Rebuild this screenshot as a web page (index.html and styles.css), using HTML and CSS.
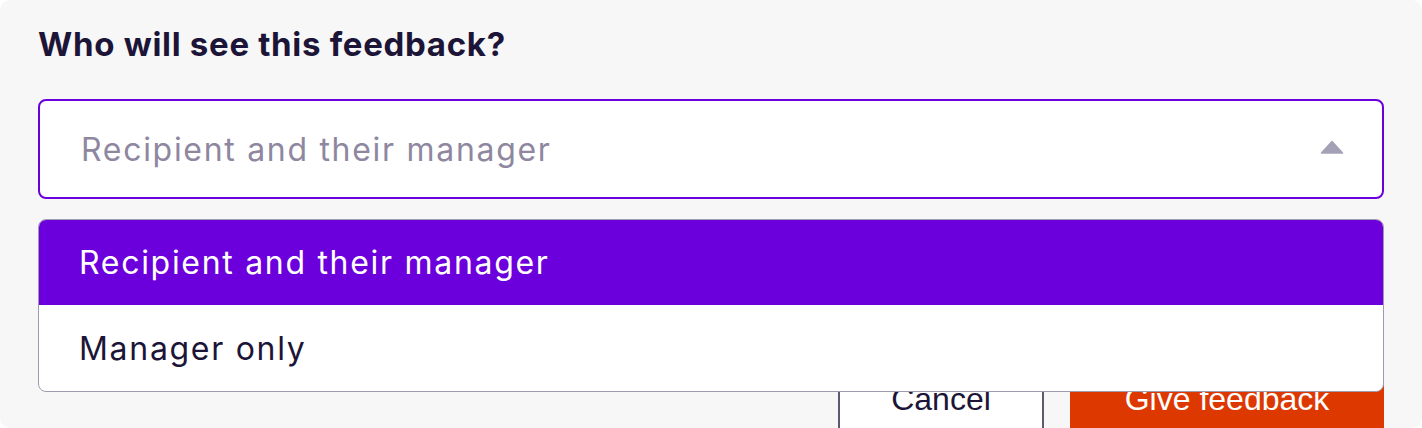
FILE: index.html
```html
<!DOCTYPE html>
<html lang="en">
<head>
<meta charset="utf-8">
<title>Who will see this feedback?</title>
<link rel="stylesheet" href="styles.css">
</head>
<body>
<div class="card">
  <h2 class="title">Who will see this feedback?</h2>
  <div class="field">
    <div class="select">
      <span class="select-value">Recipient and their manager</span>
      <svg class="caret" width="24" height="14" viewBox="0 0 24 14" aria-hidden="true"><path d="M12 1.5 L22.5 13 H1.5 Z" fill="#a4a0b5" stroke="#a4a0b5" stroke-width="1.5" stroke-linejoin="round"/></svg>
    </div>
    <div class="spacer"></div>
    <div class="actions">
      <button class="btn btn-cancel">Cancel</button>
      <button class="btn btn-primary">Give feedback</button>
    </div>
    <ul class="menu">
      <li class="option option-active">Recipient and their manager</li>
      <li class="option">Manager only</li>
    </ul>
  </div>
</div>
</body>
</html>
```
FILE: styles.css
```css
* { box-sizing: border-box; }
html, body { margin: 0; padding: 0; background: #ffffff; }
body {
  font-family: Inter, "Noto Sans", sans-serif;
  color: #1c1537;
}
.card {
  background: #f7f7f7;
  border-radius: 10px;
  height: 428px;
  overflow: hidden;
  padding: 24px 38px 0 38px;
}
.title {
  margin: 0;
  font-size: 33px;
  line-height: 40px;
  font-weight: 700;
  color: #1c1537;
  letter-spacing: 0.7px;
}
.field {
  position: relative;
  margin-top: 35px;
}
.select {
  height: 100px;
  border: 2px solid #6b00dc;
  border-radius: 8px;
  background: #ffffff;
  display: flex;
  align-items: center;
  justify-content: space-between;
  padding: 0 38px 0 41px;
}
.select-value {
  font-size: 32px;
  letter-spacing: 1.7px;
  color: #8e879f;
}
.caret { display: block; margin-top: -4px; }
.spacer { height: 168px; }
.actions {
  display: flex;
  justify-content: flex-end;
  gap: 26px;
}
.btn {
  height: 64px;
  font-family: "Liberation Sans", Arial, sans-serif;
  font-size: 32px;
  border-radius: 0;
  padding: 0;
}
.btn-cancel {
  width: 206px;
  background: #ffffff;
  border: 2px solid #5e5873;
  color: #1c1537;
}
.btn-primary {
  width: 314px;
  background: #dc3800;
  border: none;
  color: #ffffff;
}
.menu {
  position: absolute;
  left: 0;
  right: 0;
  top: 120px;
  margin: 0;
  padding: 0;
  list-style: none;
  background: #ffffff;
  border: 1px solid #a09cb0;
  border-radius: 8px;
  overflow: hidden;
}
.option {
  height: 86px;
  display: flex;
  align-items: center;
  padding-left: 40px;
  font-size: 32px;
  letter-spacing: 1.7px;
  color: #1c1537;
}
.option-active {
  background: #6c00dc;
  color: #ffffff;
  height: 85px;
}
```
